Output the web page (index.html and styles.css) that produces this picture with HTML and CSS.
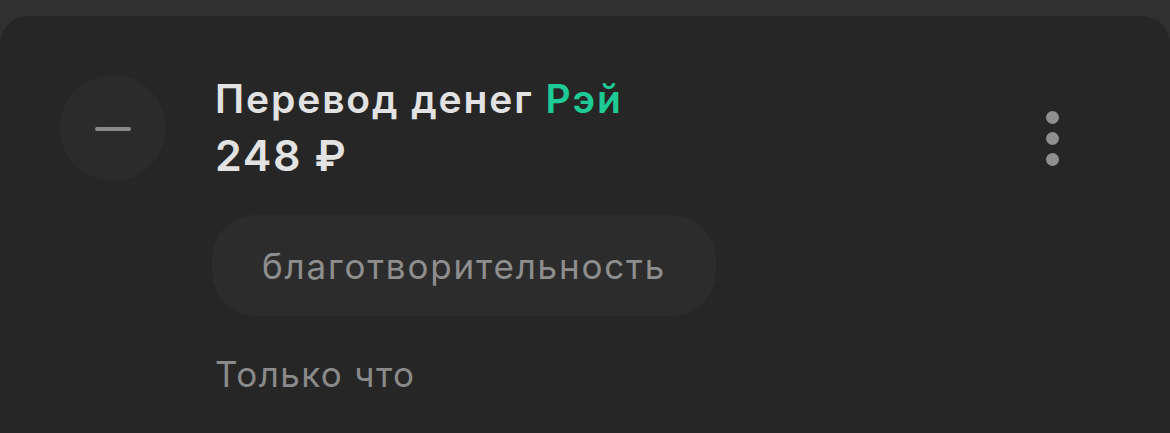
FILE: index.html
```html
<!DOCTYPE html>
<html lang="ru">
<head>
<meta charset="utf-8">
<link rel="stylesheet" href="styles.css">
</head>
<body>
<div class="card">
  <div class="row">
    <div class="avatar"><span class="minus"></span></div>
    <div class="info">
      <div class="title">Перевод денег <span class="name">Рэй</span></div>
      <div class="amount">248 ₽</div>
      <div class="tag">благотворительность</div>
      <div class="time">Только что</div>
    </div>
    <div class="menu">
      <span class="dot"></span><span class="dot"></span><span class="dot"></span>
    </div>
  </div>
</div>
</body>
</html>
```

FILE: styles.css
```css
html, body {
  margin: 0;
  padding: 0;
  background: #303030;
  height: 433px;
  overflow: hidden;
}
body {
  padding-top: 16px;
  font-family: Inter, "Noto Sans", sans-serif;
  box-sizing: border-box;
}
.card {
  background: #262626;
  border-radius: 28px 28px 0 0;
  height: 417px;
  overflow: hidden;
  padding: 59px 111px 0 60px;
  box-sizing: border-box;
}
.row {
  display: flex;
  align-items: flex-start;
}
.avatar {
  width: 106px;
  height: 106px;
  border-radius: 50%;
  background: #2b2b2b;
  display: flex;
  align-items: center;
  justify-content: center;
  flex: none;
}
.minus {
  width: 36px;
  height: 4px;
  border-radius: 2px;
  background: #8a8a8a;
  margin-top: 2px;
}
.info {
  flex: 1;
  margin-left: 49px;
  padding-top: 1px;
}
.title {
  font-size: 39px;
  line-height: 46px;
  font-weight: 600;
  color: #e2e2e2;
  letter-spacing: 1.9px;
}
.name {
  color: #1fcb95;
}
.amount {
  margin-top: 8px;
  font-size: 43px;
  line-height: 50px;
  font-weight: 600;
  color: #e2e2e2;
  letter-spacing: 1.6px;
}
.tag {
  display: inline-flex;
  align-items: center;
  margin-top: 35px;
  margin-left: -3px;
  height: 101px;
  padding: 0 50px;
  border-radius: 44px;
  background: #2c2c2c;
  font-size: 35px;
  color: #8e8e8e;
  letter-spacing: 1.8px;
}
.time {
  margin-top: 38px;
  font-size: 35px;
  line-height: 41px;
  color: #8a8a8a;
  letter-spacing: 1.4px;
}
.menu {
  display: flex;
  flex-direction: column;
  gap: 8px;
  margin-top: 36px;
  flex: none;
}
.dot {
  width: 13px;
  height: 13px;
  border-radius: 50%;
  background: #8f8f8f;
}
```
